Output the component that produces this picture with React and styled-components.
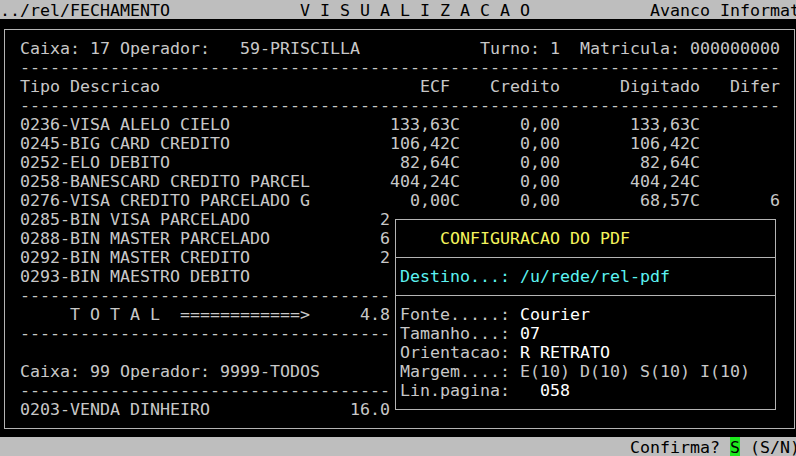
import styled, { createGlobalStyle } from 'styled-components';

const GlobalStyle = createGlobalStyle`
  html, body {
    margin: 0;
    padding: 0;
    background: #000;
  }
  body {
    overflow: hidden;
  }
`;

const DASHES = '-'.repeat(76);
// the dialog hides everything right of column 38 on its rows
const HALF_DASHES = '-'.repeat(37);

// right-aligns the numeric columns like the terminal report does
const row = (desc, ecf = '', cred = '', dig = '', dif = '') =>
  desc.padEnd(44 - ecf.length) + ecf + cred.padStart(10) + dig.padStart(14) + dif.padStart(8);

const report = [
  'Caixa: 17 Operador:   59-PRISCILLA' + ' '.repeat(12) + 'Turno: 1  Matricula: 000000000',
  DASHES,
  'Tipo Descricao'.padEnd(40) + 'ECF' + 'Credito'.padStart(11) + 'Digitado'.padStart(14) + 'Difer'.padStart(8),
  DASHES,
  row('0236-VISA ALELO CIELO', '133,63C', '0,00', '133,63C'),
  row('0245-BIG CARD CREDITO', '106,42C', '0,00', '106,42C'),
  row('0252-ELO DEBITO', '82,64C', '0,00', '82,64C'),
  row('0258-BANESCARD CREDITO PARCEL', '404,24C', '0,00', '404,24C'),
  row('0276-VISA CREDITO PARCELADO G', '0,00C', '0,00', '68,57C', '6'),
  '0285-BIN VISA PARCELADO'.padEnd(36) + '2',
  '0288-BIN MASTER PARCELADO'.padEnd(36) + '6',
  '0292-BIN MASTER CREDITO'.padEnd(36) + '2',
  '0293-BIN MAESTRO DEBITO',
  HALF_DASHES,
  '     T O T A L  ============>     4.8',
  HALF_DASHES,
  '',
  'Caixa: 99 Operador: 9999-TODOS',
  HALF_DASHES,
  '0203-VENDA DINHEIRO'.padEnd(33) + '16.0',
];

const fields = [
  { label: 'Fonte.....: ', value: 'Courier', bright: true },
  { label: 'Tamanho...: ', value: '07', bright: true },
  { label: 'Orientacao: ', value: 'R RETRATO', bright: true },
  { label: 'Margem....: ', value: 'E(10) D(10) S(10) I(10)' },
  { label: 'Lin.pagina: ', value: '  058', bright: true },
];

function App() {
  return (
    <>
      <GlobalStyle />
      <Terminal>
        <Bar>
          <Line>
            {'../rel/FECHAMENTO'.padEnd(30) + 'V I S U A L I Z A C A O'.padEnd(35) + 'Avanco Informat'}
          </Line>
        </Bar>

        <Screen>
          <Frame>
            {report.map((text, i) => (
              <Line key={i}>{text}</Line>
            ))}

            {/* dialog covers whole cells, its box lines run through the cell centres */}
            <Popup>
              <PopupBox>
                <PopupSection>
                  <Line>
                    <Ink $color="#f4f45c">{'    CONFIGURACAO DO PDF'}</Ink>
                  </Line>
                </PopupSection>
                <PopupDivider />
                <PopupSection>
                  <Line>
                    <Ink $color="#5cf2f2">Destino...: /u/rede/rel-pdf</Ink>
                  </Line>
                </PopupSection>
                <PopupDivider />
                <PopupSection>
                  {fields.map((f) => (
                    <Line key={f.label}>
                      {f.label}
                      <Ink $color={f.bright ? '#ffffff' : undefined}>{f.value}</Ink>
                    </Line>
                  ))}
                </PopupSection>
              </PopupBox>
            </Popup>
          </Frame>
        </Screen>

        <Bar>
          <Line>
            {' '.repeat(63) + 'Confirma? '}
            <Cursor>S</Cursor>
            {' (S/N)'}
          </Line>
        </Bar>
      </Terminal>
    </>
  );
}

const Terminal = styled.div`
  width: 796px;
  height: 456px;
  overflow: hidden;
  display: grid;
  grid-template-rows: 19px 418px 19px;
  background: #000;
  color: #c8c8c8;
  font-family: 'DejaVu Sans Mono', 'Liberation Mono', monospace;
  font-size: 16.61px;
`;

const Line = styled.div`
  box-sizing: border-box;
  height: 19px;
  padding-top: 1px;
  line-height: 19px;
  white-space: pre;
`;

const Bar = styled.div`
  background: #bebebe;
  color: #000;
  overflow: hidden;
`;

const Screen = styled.div`
  padding: 10px 1px 0 4px;
`;

const Frame = styled.div`
  position: relative;
  box-sizing: border-box;
  height: 400px;
  border: 1px solid #b4b4b4;
  padding: 8px 0 0 15px;
  overflow: hidden;
`;

const Popup = styled.div`
  position: absolute;
  left: 385px;
  top: 179px;
  width: 390px;
  height: 209px;
  box-sizing: border-box;
  padding: 10px 4px 8px 5px;
  background: #000;
`;

const PopupBox = styled.div`
  height: 100%;
  box-sizing: border-box;
  border: 1px solid #b4b4b4;
  display: flex;
  flex-direction: column;
`;

const PopupSection = styled.div`
  padding: 8px 0 10px 4px;
`;

const PopupDivider = styled.div`
  height: 1px;
  background: #b4b4b4;
`;

const Ink = styled.span`
  color: ${(p) => p.$color || 'inherit'};
`;

const Cursor = styled.span`
  display: inline-block;
  vertical-align: top;
  box-sizing: border-box;
  height: 19px;
  margin-top: -1px;
  padding-top: 1px;
  line-height: 19px;
  background: #1ee81e;
  color: #000;
`;

export default App;
